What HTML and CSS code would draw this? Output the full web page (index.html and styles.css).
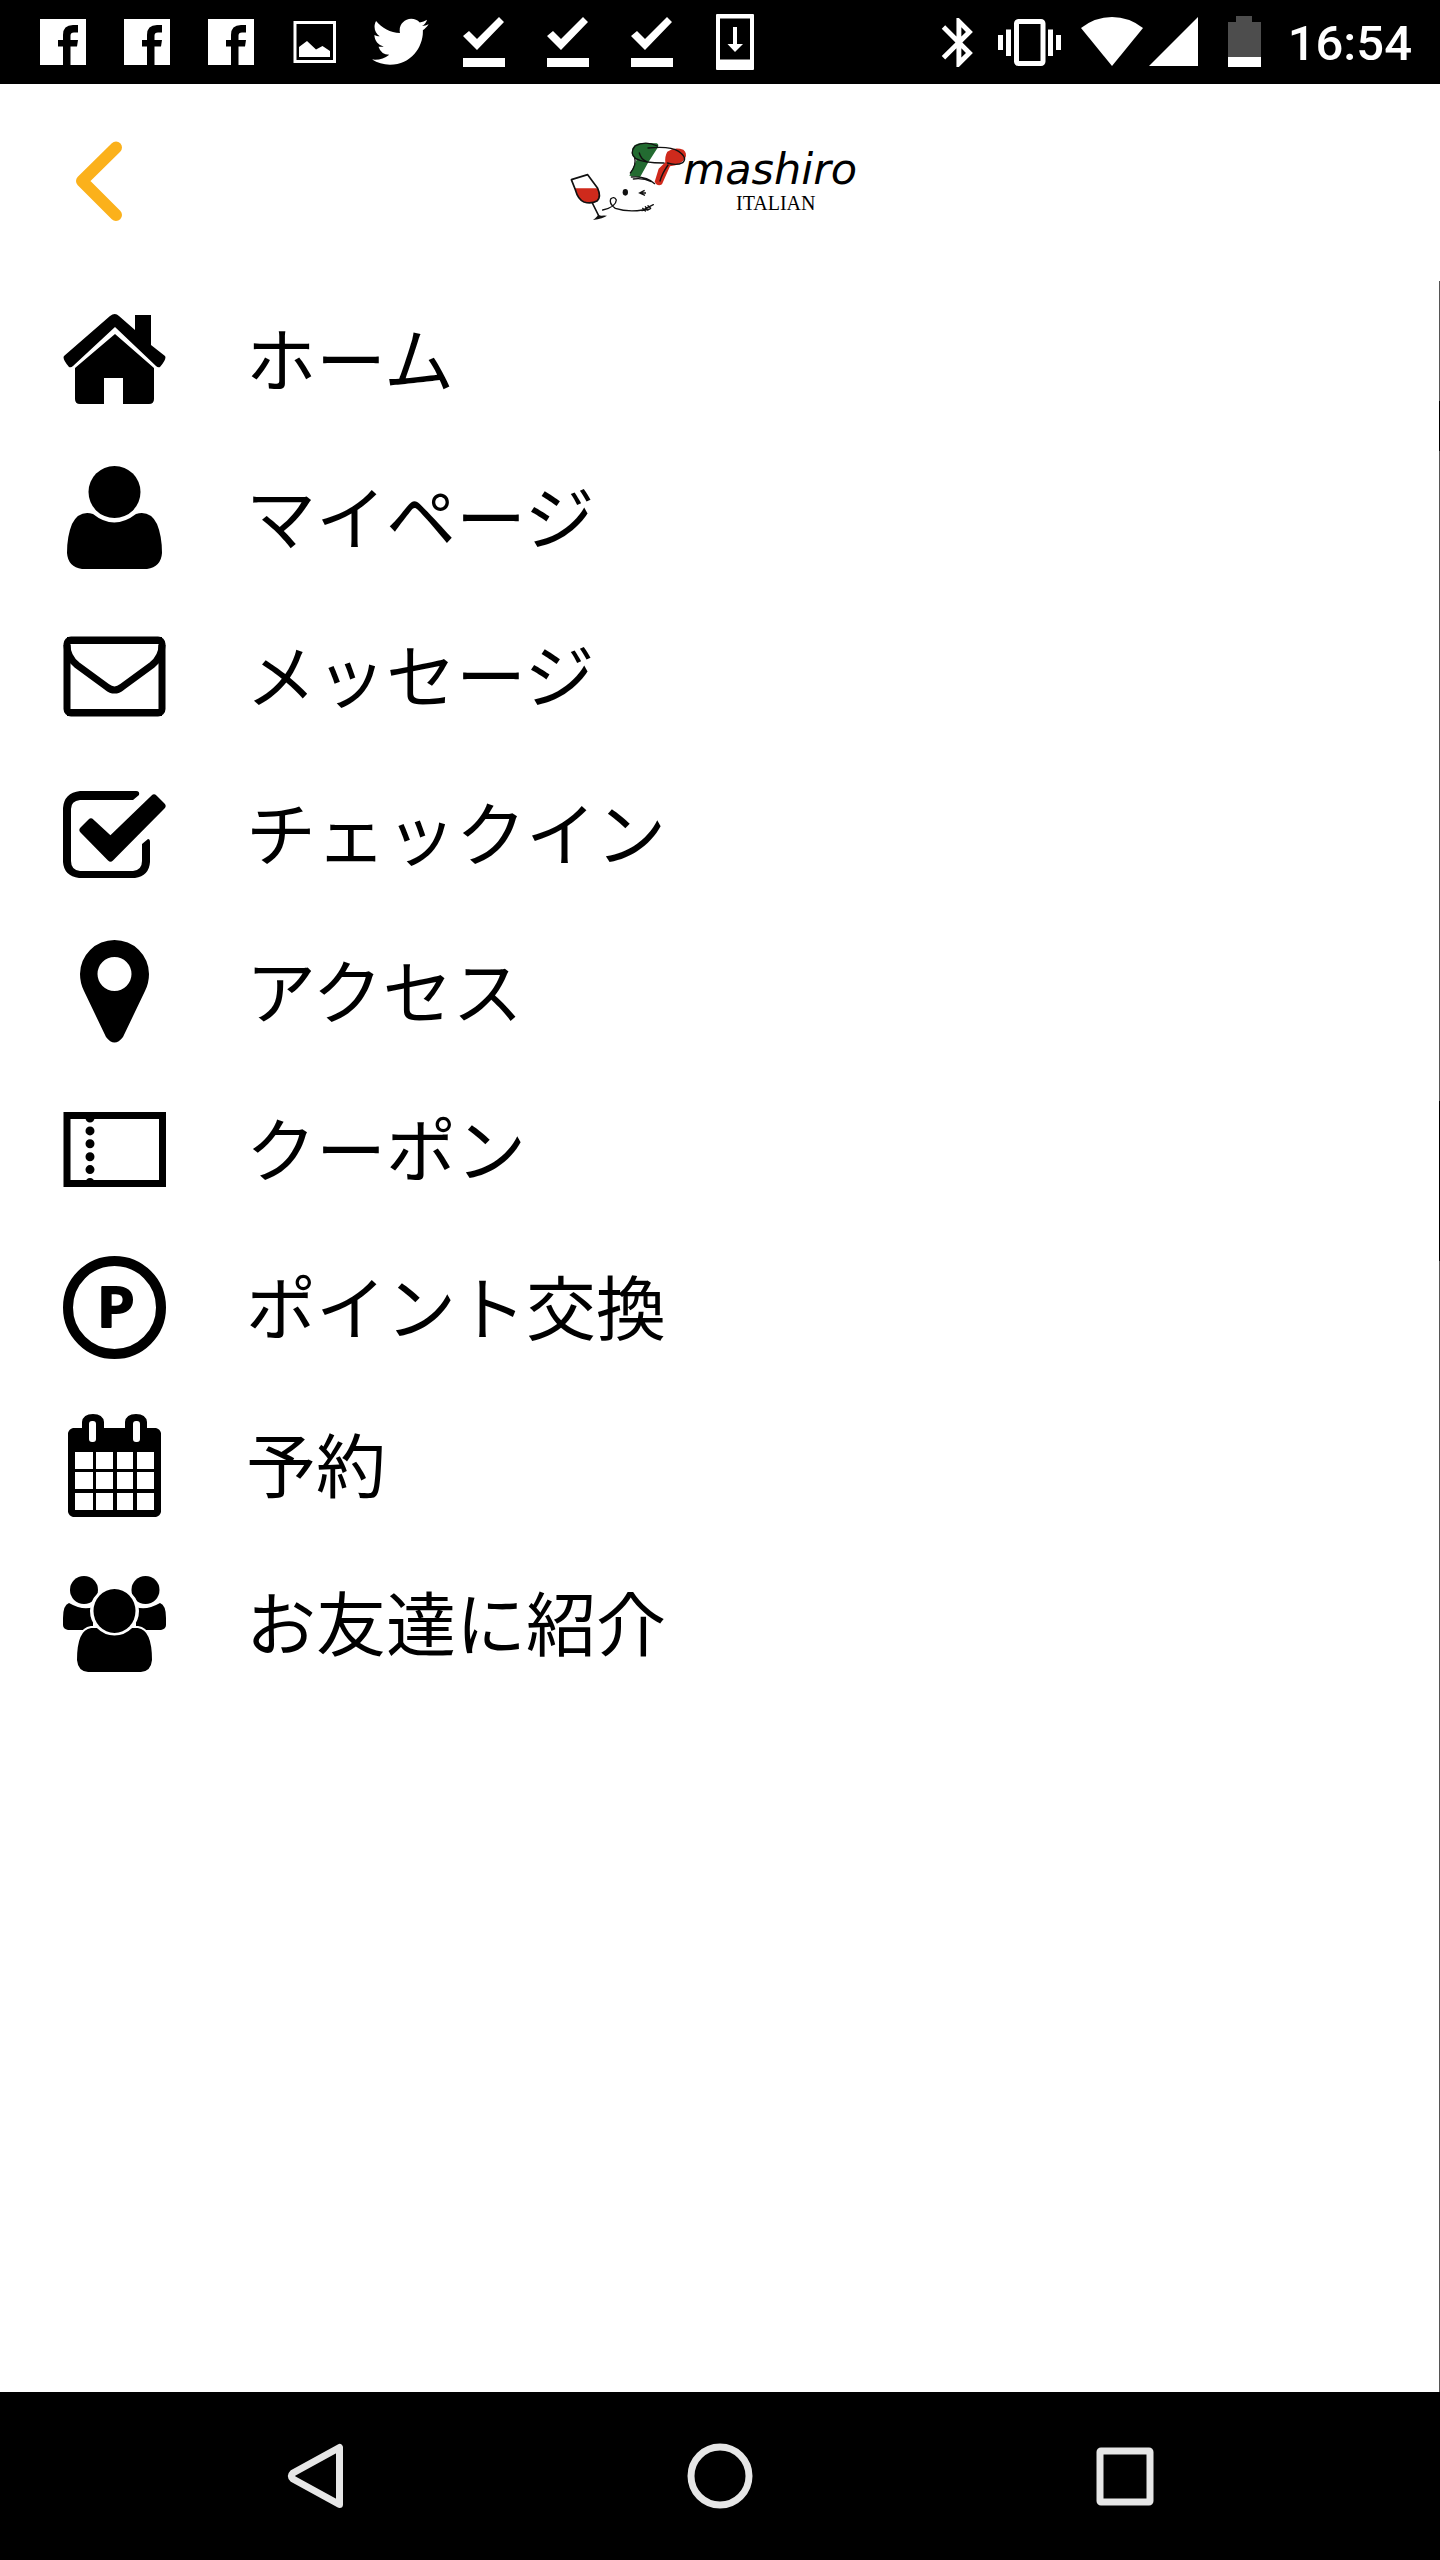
FILE: index.html
```html
<!DOCTYPE html>
<html lang="ja">
<head>
    <meta charset="UTF-8">
    <meta name="viewport" content="width=device-width, initial-scale=1.0">
    <title>mashiro ITALIAN</title>
    <link rel="stylesheet" href="styles.css">
</head>
<body>
    <!-- icons used more than once -->
    <svg class="defs" aria-hidden="true">
        <symbol id="fb" viewBox="0 0 84 84">
            <path d="M19 19H65V65H49.500V46.500H56L57 40H49.500V35.500Q49.500 32.500 53 32.500H57V25H52Q42 25 42 35V40H37V46.500H42V65H19z"/>
        </symbol>
        <symbol id="done" viewBox="0 0 84 84">
            <path d="M22 36L28 31L36 39L58 17L63 22L36 50zM22 58H64V67H22z"/>
        </symbol>
    </svg>

    <div id="layout">
        <div class="status">
            <div class="status_left">
                <svg><use href="#fb"/></svg>
                <svg><use href="#fb"/></svg>
                <svg><use href="#fb"/></svg>
                <svg viewBox="0 0 84 84">
                    <path d="M22 22.500H61.500V61.500H22z" fill="none" stroke="#fff" stroke-width="3"/>
                    <path d="M26 57V47L34 41L43 49.500L49.500 46L57 51V57z"/>
                </svg>
                <svg viewBox="0 0 84 84">
                    <path transform="translate(11 8) scale(2.7)" d="M22.46 6c-.77.35-1.6.58-2.46.69.88-.53 1.56-1.37 1.88-2.38-.83.5-1.75.85-2.72 1.05C18.37 4.5 17.26 4 16 4c-2.35 0-4.27 1.92-4.27 4.29 0 .34.04.67.11.98C8.28 9.09 5.11 7.38 3 4.79c-.37.63-.58 1.37-.58 2.15 0 1.49.75 2.81 1.91 3.56-.71 0-1.37-.2-1.95-.5v.03c0 2.08 1.48 3.82 3.44 4.21a4.22 4.22 0 0 1-1.93.07 4.28 4.28 0 0 0 4 2.98 8.521 8.521 0 0 1-5.33 1.84c-.34 0-.68-.02-1.02-.06C3.44 20.29 5.7 21 8.12 21 16 21 20.33 14.46 20.33 8.79c0-.19 0-.37-.01-.56.84-.6 1.56-1.36 2.14-2.23z"/>
                </svg>
                <svg><use href="#done"/></svg>
                <svg><use href="#done"/></svg>
                <svg><use href="#done"/></svg>
                <svg viewBox="0 0 84 84">
                    <path fill-rule="evenodd" d="M24 14H60Q61 14 61 15V69Q61 70 60 70H24Q23 70 23 69V15Q23 14 24 14zM27 18.500V59.500H57V18.500z"/>
                    <path d="M40 27H44V44H50L42 52L34.500 44H40z"/>
                </svg>
            </div>
            <div class="status_right">
                <svg class="bt" viewBox="0 0 56 84">
                    <path fill-rule="evenodd" transform="translate(0.500 13) scale(2.45)" d="M17.71 7.71L12 2h-1v7.59L6.41 5 5 6.41 10.59 12 5 17.59 6.41 19 11 14.41V22h1l5.71-5.710-4.300-4.290 4.300-4.290zM13 5.830l1.880 1.880L13 9.590V5.830zm1.880 10.460L13 18.170v-3.760l1.880 1.880z"/>
                </svg>
                <svg class="vibrate" viewBox="0 0 86 84">
                    <path d="M13 35H18V50H13zM21 29.500H26V56H21zM63 29.500H68V56H63zM71 35H76V50H71z"/>
                    <rect x="31.500" y="21.500" width="26.500" height="42" rx="2" fill="none" stroke="#fff" stroke-width="5"/>
                </svg>
                <svg class="wifi" viewBox="0 0 75 84">
                    <path d="M10 28Q24 17 41 17T72 28L41 66z"/>
                </svg>
                <svg class="signal" viewBox="0 0 67 84">
                    <path d="M3 66H52V17z"/>
                </svg>
                <svg class="battery" viewBox="0 0 63 84">
                    <path fill="#4d4d4d" d="M15 57V22H23V16H39V22H48V57z"/>
                    <path d="M15 57H48V67H15z"/>
                </svg>
                <time>16:54</time>
            </div>
        </div>

        <header>
            <button type="button" class="back" aria-label="戻る">
                <svg viewBox="0 0 48 82">
                    <path d="M41 7.500L7 41L41 75" fill="none" stroke="#fbb11b" stroke-width="12" stroke-linecap="round" stroke-linejoin="round"/>
                </svg>
            </button>
            <svg class="logo" viewBox="0 8 1080 360">
                <!-- wine glass -->
                <path fill="#cf2a1c" d="M106 204H173Q184 226 172 241Q152 253 130 244Q113 238 106 204z"/>
                <g fill="none" stroke="#111" stroke-width="5" stroke-linecap="round" stroke-linejoin="round">
                    <path d="M94 178L143 163L173 204Q184 228 172 241Q154 252 132 245Q114 237 106 208z"/>
                    <path d="M157 248L178 290"/>
                </g>
                <path fill="#111" d="M159 299Q172 289 174 284L184 286Q192 285 201 286Q190 294 159 299z"/>
                <!-- face -->
                <ellipse cx="256" cy="216" rx="8" ry="10" fill="#111"/>
                <path d="M314 210L299 218L315 225M299 218H318" fill="none" stroke="#111" stroke-width="4"/>
                <path d="M188 269Q228 260 229 239Q222 226 212 236Q206 250 226 264Q262 276 308 269L340 253M308 264L316 272M316 259L324 270M324 256L332 264M306 271L330 266" fill="none" stroke="#111" stroke-width="4" stroke-linecap="round"/>
                <!-- chef hat -->
                <path fill="#fff" d="M350 76L385 92L374 128L344 186L298 170L325 120z"/>
                <path fill="#236b31" d="M276 92Q278 68 308 68L350 69Q359 72 352 84L325 126L300 171L268 166L290 118Q274 110 276 92z"/>
                <path fill="#cf2a1c" d="M382 94Q404 78 430 88Q442 98 436 112Q426 132 390 138L366 192Q352 200 344 184L356 145L376 126Q374 108 382 94z"/>
                <g fill="none" stroke="#111" stroke-width="4" stroke-linecap="round">
                    <path d="M352 77Q316 60 285 77Q268 98 286 114Q310 128 372 128"/>
                    <path d="M324 83Q390 76 416 93Q444 113 428 127Q410 137 382 128"/>
                    <path d="M284 112Q290 134 271 158M298 98Q302 116 320 124M274 170Q320 166 344 190M280 176Q310 172 334 184M384 134Q366 160 360 182"/>
                </g>
                <text class="logo_name" x="430" y="190">mashiro</text>
                <text class="logo_sub" x="588" y="268">ITALIAN</text>
            </svg>
        </header>

        <main>
            <nav>
                <ul>
                    <li><a href="#">
                        <svg viewBox="0 -1 104 104">
                            <path d="M47 7Q52 3 56 7L72 21V6H88V36L102 47Q104 50 97 58Q95 59 93 57L52 18L10 57Q8 59 6 58Q-1 50 1 47z"/>
                            <path d="M52 25L91 59V90Q91 95 86 95H60V69H41V95H17Q12 95 12 90V59z"/>
                        </svg>
                        <span>ホーム</span>
                    </a></li>
                    <li><a href="#">
                        <svg viewBox="0 -1 104 104">
                            <circle cx="51.500" cy="25" r="26"/>
                            <path d="M30 47Q51 64 73 47Q87 43 94 57Q99 69 99 86Q98 100 84 102H19Q5 100 4 86Q4 69 9 57Q16 43 30 47z"/>
                        </svg>
                        <span>マイページ</span>
                    </a></li>
                    <li><a href="#">
                        <svg viewBox="0 -1 104 104">
                            <g fill="none" stroke="#000" stroke-width="7">
                                <rect x="4" y="15" width="95" height="73" rx="4"/>
                                <path d="M4 20Q4 32 14 40L44 62Q51.500 68 59 62L89 40Q99 32 99 20"/>
                                <path d="M4 87.500H99M4 15.500H99"/>
                            </g>
                        </svg>
                        <span>メッセージ</span>
                    </a></li>
                    <li><a href="#">
                        <svg viewBox="0 -1 104 104">
                            <path d="M17 8H73Q77 8 76 12L70 17H17Q8 18 8 26V78Q8 87 17 88H70Q79 87 79 78V61L85 56Q87 56 87 59V79Q86 93 72 95H16Q1 93 0 79V25Q1 10 17 8z"/>
                            <path d="M28 39L47.500 57L91 15L99 23L47.500 75L20 47z" stroke="#000" stroke-width="7" stroke-linejoin="round"/>
                        </svg>
                        <span>チェックイン</span>
                    </a></li>
                    <li><a href="#">
                        <svg viewBox="0 -1 104 104">
                            <path fill-rule="evenodd" d="M17 33A34.500 34 0 0 1 86 33Q86 42 82 50L60 96Q51.500 107 43 96L21 50Q17 42 17 33zM34.500 33A17 17 0 0 0 68.500 33A17 17 0 0 0 34.500 33z"/>
                        </svg>
                        <span>アクセス</span>
                    </a></li>
                    <li><a href="#">
                        <svg viewBox="0 -1 104 104">
                            <rect x="4" y="16.500" width="95.500" height="68" fill="none" stroke="#000" stroke-width="7"/>
                            <path d="M27 19V84" fill="none" stroke="#000" stroke-width="9" stroke-linecap="round" stroke-dasharray="0 12.900"/>
                        </svg>
                        <span>クーポン</span>
                    </a></li>
                    <li><a href="#">
                        <svg viewBox="0 -1 104 104">
                            <circle cx="51.500" cy="50.500" r="46.500" fill="none" stroke="#000" stroke-width="10"/>
                            <text class="point" x="35" y="70">P</text>
                        </svg>
                        <span>ポイント交換</span>
                    </a></li>
                    <li><a href="#">
                        <svg viewBox="0 -1 104 104">
                            <path d="M10 13H19V7Q20 -1 30 -1T41 7V13H62V7Q63 -1 73 -1T84 7V13H93Q97 14 98 18V97Q97 101 93 102H10Q6 101 5 97V18Q6 14 10 13z"/>
                            <g fill="#fff">
                                <rect x="26" y="6" width="7" height="21" rx="3"/>
                                <rect x="70" y="6" width="7" height="21" rx="3"/>
                                <path d="M12 37H30V54H12zM33 37H50V54H33zM54 37H70V54H54zM74 37H91V54H74z"/>
                                <path d="M12 57H30V74H12zM33 57H50V74H33zM54 57H70V74H54zM74 57H91V74H74z"/>
                                <path d="M12 78H30V95H12zM33 78H50V95H33zM54 78H70V95H54zM74 78H91V95H74z"/>
                            </g>
                        </svg>
                        <span>予約</span>
                    </a></li>
                    <li><a href="#">
                        <svg viewBox="0 -1 104 104">
                            <circle cx="21" cy="17" r="14"/>
                            <circle cx="82.500" cy="17" r="14"/>
                            <path d="M6 30Q20 38 30 34V57H5Q0 56 0 52V45Q0 32 6 30zM97 30Q83 38 73 34V57H98Q103 56 103 52V45Q103 32 97 30z"/>
                            <g stroke="#fff" stroke-width="2">
                                <path d="M28 54H75Q90 56 90 87Q89 99 78 100H25Q14 99 13 87Q13 56 28 54z"/>
                                <circle cx="51.500" cy="38" r="23.500" fill="#fff"/>
                            </g>
                            <ellipse cx="51.500" cy="38" rx="21" ry="22"/>
                        </svg>
                        <span>お友達に紹介</span>
                    </a></li>
                </ul>
            </nav>
        </main>

        <div class="softkeys">
            <button type="button" aria-label="戻る">
                <svg viewBox="0 0 66 66">
                    <path d="M57.500 4.500V61.500L11 36Q8 33 11 30z"/>
                </svg>
            </button>
            <button type="button" aria-label="ホーム">
                <svg viewBox="0 0 66 66">
                    <circle cx="33" cy="33" r="29"/>
                </svg>
            </button>
            <button type="button" aria-label="履歴">
                <svg viewBox="0 0 66 66">
                    <rect x="8" y="8" width="50" height="51" rx="1"/>
                </svg>
            </button>
        </div>
    </div>
</body>
</html>
```

FILE: styles.css
```css
* {
    margin: 0;
    padding: 0;
    box-sizing: border-box;
}
body {
    background-color: #fff;
    color: #000;
    font-family: "Noto Sans CJK JP", sans-serif;
}
ul {list-style: none;}
a {color: inherit; text-decoration: none;}
svg {display: block;}
button {
    border: 0;
    background: none;
    cursor: pointer;
}
.defs {
    position: absolute;
    width: 0;
    height: 0;
}
#layout {
    min-height: 100vh;
    display: flex;
    flex-direction: column;
}

/* status bar */
.status {
    display: flex;
    justify-content: space-between;
    height: 84px;
    padding: 0 28px 0 21px;
    background-color: #000;
    color: #fff;
}
.status svg {
    width: 84px;
    height: 84px;
    fill: #fff;
}
.status_left,
.status_right {display: flex;}
.status .bt {width: 56px;}
.status .vibrate {width: 86px;}
.status .wifi {width: 75px;}
.status .signal {width: 67px;}
.status .battery {width: 63px;}
.status time {
    margin-left: 12px;
    font-family: Roboto, sans-serif;
    font-size: 49px;
    font-weight: 500;
    line-height: 88px;
}

/* header */
header {
    display: grid;
    grid-template-columns: 1fr auto 1fr;
    align-items: center;
    height: 197px;
}
.back {
    justify-self: start;
    padding: 0 0 4px 75px;
}
.back svg {
    width: 48px;
    height: 82px;
}
.logo {
    width: 360px;
    height: 120px;
}
/* the logo is drawn at 3x */
.logo_name {
    font-family: "Segoe Script", "DejaVu Sans", sans-serif;
    font-size: 129px;
    font-style: italic;
}
.logo_sub {
    font-family: "Liberation Serif", serif;
    font-size: 60px;
}

/* menu */
main {
    flex: 1;
    background: linear-gradient(#555 120px, #000 120px 170px, #555 170px 820px, #000 820px 980px, #555 980px) right top / 1px 100% no-repeat;
}
nav a {
    display: flex;
    align-items: center;
    gap: 79px;
    height: 158px;
    padding-left: 63px;
    font-size: 70px;
    line-height: 104px;
}
nav svg {
    width: 104px;
    height: 104px;
}
nav span {padding-bottom: 6px;}
.point {
    font-family: Lato, sans-serif;
    font-size: 56px;
    font-weight: 900;
    stroke: #000;
    stroke-width: 2px;
    stroke-linejoin: round;
}

/* navigation keys */
.softkeys {
    display: flex;
    height: 168px;
    padding: 0 112px;
    background-color: #000;
}
.softkeys button {
    flex: 1;
    display: flex;
    align-items: center;
    justify-content: center;
}
.softkeys svg {
    width: 66px;
    height: 66px;
    fill: none;
    stroke: #e6e6e6;
    stroke-width: 7px;
    stroke-linejoin: round;
}
```
